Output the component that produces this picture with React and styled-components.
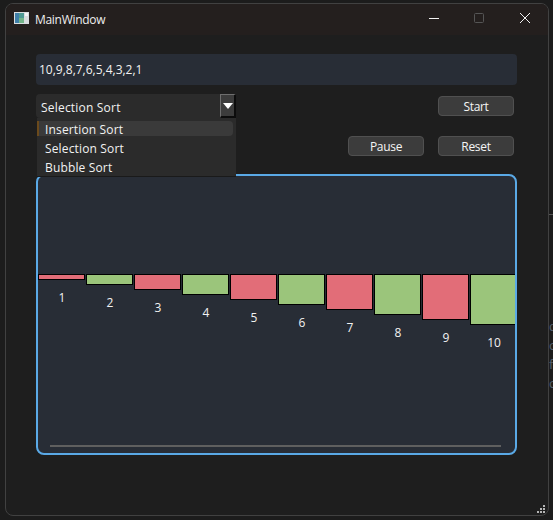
import React from 'react';
import styled, { createGlobalStyle } from 'styled-components';

const ALGORITHMS = ['Insertion Sort', 'Selection Sort', 'Bubble Sort'];
const VALUES = [1, 2, 3, 4, 5, 6, 7, 8, 9, 10];
const BEHIND = ['d', 'c', 'f', 'c'];

const App = () => (
  <>
    <GlobalStyle />
    <Desktop>
      <BehindRule />
      <BehindText>
        {BEHIND.map((letter, i) => <span key={i}>{letter}</span>)}
      </BehindText>
      <Window>
        <TitleBar>
          <AppIcon viewBox="0 0 15 12">
            <rect width="15" height="12" fill="#d9dde0" />
            <rect x="1" y="1" width="9" height="10" fill="#4f9a94" />
            <rect x="1" y="1" width="4" height="10" fill="#3f7fa8" />
            <rect x="5" y="6" width="5" height="5" fill="#74b58a" />
            <rect x="11" y="1" width="3" height="3" fill="#f4f6f7" />
          </AppIcon>
          <Title>MainWindow</Title>
          <WindowControls>
            <ControlIcon viewBox="0 0 12 12">
              <path d="M2 6.5h10" stroke="#f2f2f2" strokeWidth="1" fill="none" />
            </ControlIcon>
            <ControlIcon viewBox="0 0 12 12">
              <rect x="1.5" y="1.5" width="9" height="9" rx="1" stroke="#555" fill="none" />
            </ControlIcon>
            <ControlIcon viewBox="0 0 12 12">
              <path d="M1 1l10 10M11 1L1 11" stroke="#f2f2f2" strokeWidth="1" fill="none" />
            </ControlIcon>
          </WindowControls>
        </TitleBar>

        <Content>
          <ArrayInput>10,9,8,7,6,5,4,3,2,1</ArrayInput>

          <ComboRow>
            <Combo>
              <ComboValue>Selection Sort</ComboValue>
              <ComboArrow>
                <svg width="10" height="6" viewBox="0 0 10 6">
                  <path d="M0 0h10L5 6z" fill="#fff" />
                </svg>
              </ComboArrow>
              <Dropdown>
                {ALGORITHMS.map((name, i) => (
                  <DropdownItem key={name} $active={i === 0}>{name}</DropdownItem>
                ))}
              </Dropdown>
            </Combo>
            <Button>Start</Button>
          </ComboRow>

          <ButtonRow>
            <Button>Pause</Button>
            <Button>Reset</Button>
          </ButtonRow>

          <ChartPanel>
            <Bars>
              {VALUES.map((n) => (
                <BarColumn key={n}>
                  <Bar $even={n % 2 === 0} style={{ height: n * 5 + 1 }} />
                  <BarLabel>{n}</BarLabel>
                </BarColumn>
              ))}
            </Bars>
            <ScrollThumb />
          </ChartPanel>
        </Content>

        <ResizeGrip viewBox="0 0 8 8">
          <path d="M6 0h2v2H6zM3 3h2v2H3zM6 3h2v2H6zM0 6h2v2H0zM3 6h2v2H3zM6 6h2v2H6z" fill="#b5b5b5" />
        </ResizeGrip>
      </Window>
    </Desktop>
  </>
);

const GlobalStyle = createGlobalStyle`
  html, body {
    margin: 0;
    background: #1c1c1c;
  }

  * {
    box-sizing: border-box;
  }
`;

const Desktop = styled.div`
  position: relative;
  width: 553px;
  height: 520px;
  overflow: hidden;
  padding: 3px 4px 4px 5px;
  font-family: 'Open Sans', 'Noto Sans', sans-serif;
  font-size: 12px;
  color: #f2f2f2;
`;

const BehindRule = styled.div`
  position: absolute;
  top: 214px;
  left: 548px;
  width: 5px;
  height: 1px;
  background: #555;
`;

const BehindText = styled.div`
  position: absolute;
  top: 317px;
  left: 549px;
  display: flex;
  flex-direction: column;
  gap: 1px;
  color: #56616e;
  font-size: 13px;
  line-height: 18px;
`;

const Window = styled.div`
  position: relative;
  height: 513px;
  background: #1e1e1e;
  border: 1px solid #414141;
  border-radius: 8px;
  overflow: hidden;
`;

const TitleBar = styled.div`
  display: flex;
  align-items: center;
  height: 31px;
  padding: 0 0 3px 8px;
  background: #241f1e;
`;

const AppIcon = styled.svg`
  width: 15px;
  height: 12px;
  margin-right: 6px;
`;

const Title = styled.span`
  flex: 1;
  margin-top: 2px;
  font-size: 12px;
  letter-spacing: -0.3px;
  color: #eeeeee;
`;

const WindowControls = styled.div`
  display: flex;
  align-items: center;
  gap: 34px;
  padding-right: 17px;
`;

const ControlIcon = styled.svg`
  width: 12px;
  height: 12px;
`;

const Content = styled.div`
  display: flex;
  flex-direction: column;
  padding: 19px 31px 0 30px;
`;

const ArrayInput = styled.div`
  display: flex;
  align-items: center;
  width: 481px;
  height: 31px;
  padding-left: 3px;
  background: #282d36;
  border-radius: 4px;
`;

const ComboRow = styled.div`
  display: flex;
  justify-content: space-between;
  align-items: center;
  margin-top: 9px;
  padding-right: 3px;
`;

const Combo = styled.div`
  position: relative;
  display: flex;
  justify-content: space-between;
  align-items: center;
  width: 200px;
  height: 24px;
  padding-left: 5px;
  background: #2b2b2b;
  border-radius: 4px 0 0 4px;
`;

const ComboValue = styled.span`
  padding-top: 2px;
  font-size: 12px;
  letter-spacing: 0.2px;
`;

const ComboArrow = styled.div`
  display: flex;
  align-items: center;
  justify-content: center;
  width: 16px;
  height: 24px;
  background: #3c3c3c;
  border-style: solid;
  border-width: 1px 2px 2px 1px;
  border-color: #6e6e6e #0c0c0c #0c0c0c #6e6e6e;
`;

const Dropdown = styled.div`
  position: absolute;
  top: 24px;
  left: 1px;
  z-index: 2;
  display: flex;
  flex-direction: column;
  gap: 4px;
  width: 199px;
  height: 59px;
  padding-top: 3px;
  background: #2b2b2b;
  border-bottom: 1px solid #1a1a1a;
`;

const DropdownItem = styled.div`
  display: flex;
  align-items: center;
  width: 196px;
  height: 15px;
  padding: 2px 0 0 6px;
  border-radius: 0 4px 4px 0;
  background: ${(p) => (p.$active ? '#3a3a3a' : 'transparent')};
  border-left: 2px solid ${(p) => (p.$active ? '#6b4a1c' : 'transparent')};
  font-size: 12px;
  letter-spacing: 0.15px;
`;

const Button = styled.div`
  display: flex;
  align-items: center;
  justify-content: center;
  width: 76px;
  height: 20px;
  background: #3c3c3c;
  border: 1px solid #505050;
  border-radius: 4px;
  font-size: 12px;
  letter-spacing: -0.3px;
  color: #f5f5f5;
`;

const ButtonRow = styled.div`
  display: flex;
  justify-content: flex-end;
  gap: 14px;
  margin-top: 18px;
  padding-right: 3px;
`;

const ChartPanel = styled.div`
  position: relative;
  width: 481px;
  height: 281px;
  margin-top: 18px;
  padding-top: 98px;
  background: #282d36;
  border: 2px solid #5aa9e6;
  border-radius: 8px;
  overflow: hidden;
`;

const Bars = styled.div`
  display: flex;
  align-items: flex-start;
  gap: 1px;
`;

const BarColumn = styled.div`
  display: flex;
  flex-direction: column;
  align-items: center;
  flex: 0 0 47px;
`;

const Bar = styled.div`
  width: 100%;
  background: ${(p) => (p.$even ? '#9bc57b' : '#e26d78')};
  border: 1px solid #000;
`;

const BarLabel = styled.span`
  margin-top: 10px;
  padding-left: 1px;
  font-size: 12px;
  line-height: 16px;
`;

const ScrollThumb = styled.div`
  position: absolute;
  left: 12px;
  right: 14px;
  bottom: 6px;
  height: 2px;
  background: #5f5f5f;
`;

const ResizeGrip = styled.svg`
  position: absolute;
  right: 3px;
  bottom: 2px;
  width: 8px;
  height: 8px;
`;

export default App;
